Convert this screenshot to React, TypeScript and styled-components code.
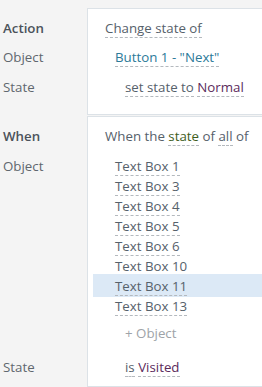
import { createGlobalStyle, styled } from 'styled-components'

const GlobalStyle = createGlobalStyle`
  html, body {
    margin: 0;
    height: 100%;
  }
  body {
    background: #f4f4f4;
    font-family: 'Open Sans', 'Noto Sans', sans-serif;
    font-size: 13.3px;
    color: #56616b;
  }
  #root {
    height: 100%;
  }
`

const Page = styled.div`
  display: flex;
  flex-direction: column;
  gap: 1px;
  min-height: 100%;
  padding-top: 8px;
  box-sizing: border-box;
  overflow: hidden;
`

const Section = styled.section<{ rows: string; grow?: boolean }>`
  display: grid;
  grid-template-columns: 87px 1fr;
  grid-template-rows: ${({ rows }) => rows};
  flex: ${({ grow }) => (grow ? 1 : 'none')};
`

const Card = styled.div`
  grid-column: 2;
  grid-row: 1 / -1;
  background: #fff;
  border: 1px solid #dce2e7;
  border-right: none;
`

const Label = styled.div<{ row: number; bold?: boolean; line?: number }>`
  grid-column: 1;
  grid-row: ${({ row }) => row};
  align-self: start;
  padding-left: 3px;
  line-height: ${({ line }) => line ?? 30}px;
  font-weight: ${({ bold }) => (bold ? 600 : 400)};
  color: ${({ bold }) => (bold ? '#4b525a' : '#60676e')};
`

const Line = styled.div<{ row: number; indent: number; top?: number }>`
  grid-column: 2;
  grid-row: ${({ row }) => row};
  align-self: start;
  z-index: 1;
  padding-left: ${({ indent }) => indent}px;
  padding-top: ${({ top }) => top ?? 0}px;
  line-height: 30px;
  white-space: nowrap;
`

const List = styled.div`
  grid-column: 2;
  grid-row: 3;
  z-index: 1;
  display: flex;
  flex-direction: column;
  padding-left: 6px;
`

const Item = styled.div<{ selected?: boolean }>`
  height: 20px;
  line-height: 20px;
  padding-left: 22px;
  white-space: nowrap;
  ${({ selected }) =>
    selected &&
    `
    background: #dce9f6;
    margin: -2px 0 -1px;
    padding-top: 2px;
    padding-bottom: 1px;
  `}
`

const Dashed = styled.span<{ tone?: 'link' | 'value' | 'field' }>`
  border-bottom: 1px dashed #b4b9be;
  color: ${({ tone }) =>
    tone === 'link' ? '#2c7a99' : tone === 'value' ? '#5b2b5c' : tone === 'field' ? '#3f5e1d' : 'inherit'};
`

const AddLink = styled.span`
  color: #9ea3a8;
`

const objects = ['Text Box 1', 'Text Box 3', 'Text Box 4', 'Text Box 5', 'Text Box 6', 'Text Box 10', 'Text Box 11', 'Text Box 13']

export default function App() {
  return (
    <>
      <GlobalStyle />
      <Page>
        <Section rows="5px 29px 30px 30px 13px">
          <Card />
          <Label row={2} bold>
            Action
          </Label>
          <Label row={3}>Object</Label>
          <Label row={4}>State</Label>

          <Line row={2} indent={18}>
            <Dashed>Change state of</Dashed>
          </Line>
          <Line row={3} indent={28}>
            <Dashed tone="link">Button 1 - "Next"</Dashed>
          </Line>
          <Line row={4} indent={38}>
            <Dashed>set state to</Dashed> <Dashed tone="value">Normal</Dashed>
          </Line>
        </Section>

        <Section rows="5px 35px auto 36px 30px 1fr" grow>
          <Card />
          <Label row={2} bold>
            When
          </Label>
          <Label row={3} line={20}>
            Object
          </Label>
          <Label row={5}>State</Label>

          <Line row={2} indent={18}>
            When the <Dashed tone="field">state</Dashed> of <Dashed>all</Dashed> of
          </Line>
          <List>
            {objects.map((name) => (
              <Item key={name} selected={name === 'Text Box 11'}>
                <Dashed>{name}</Dashed>
              </Item>
            ))}
          </List>
          <Line row={4} indent={38} top={2}>
            <AddLink>+ Object</AddLink>
          </Line>
          <Line row={5} indent={38}>
            <Dashed>is</Dashed> <Dashed tone="value">Visited</Dashed>
          </Line>
        </Section>
      </Page>
    </>
  )
}
